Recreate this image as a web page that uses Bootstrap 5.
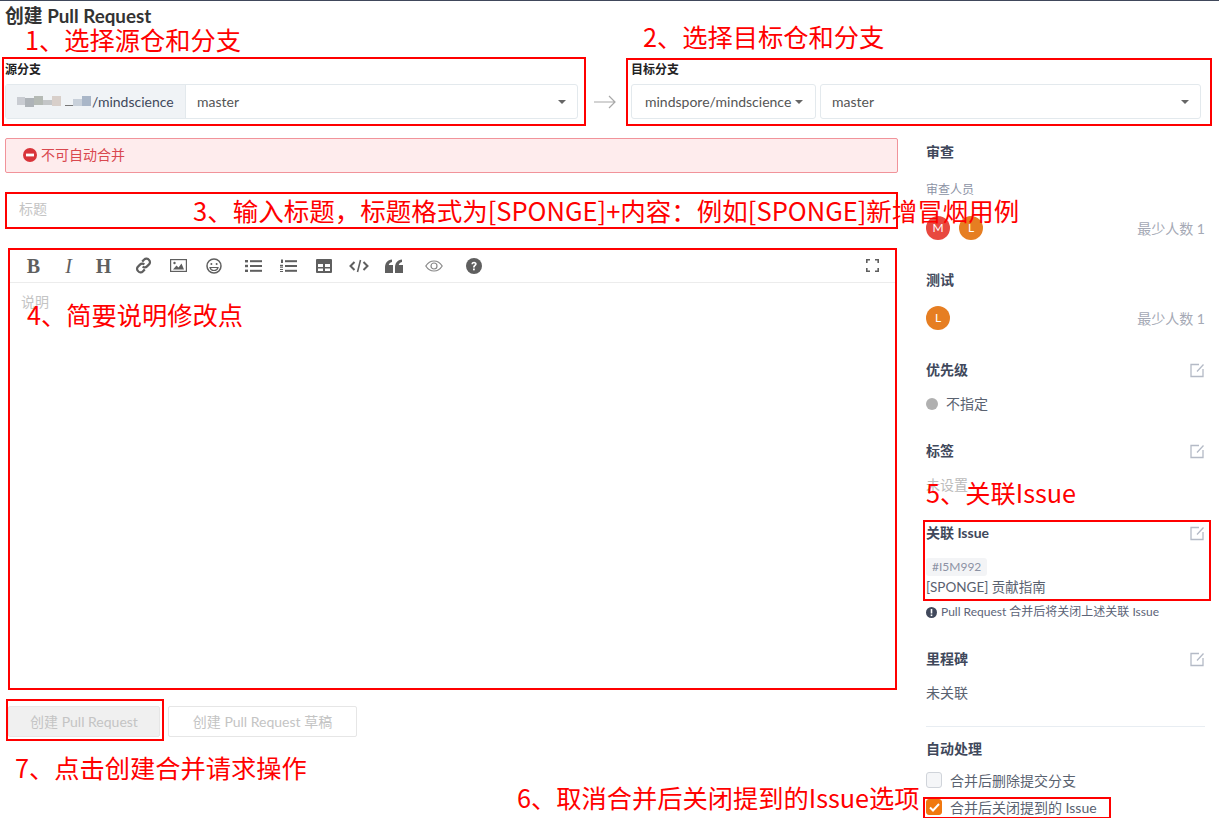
<!DOCTYPE html>
<html lang="zh-CN">
<head>
    <meta charset="UTF-8">
    <title>创建 Pull Request</title>
    <link href="https://cdn.jsdelivr.net/npm/bootstrap@5.3.0/dist/css/bootstrap.min.css" rel="stylesheet">
    <style>
        body { font-family: Lato, "Noto Sans CJK SC", sans-serif; font-size: 14px; color: #40485b; background: #fff; border-top: 1px solid #40485b; }
        .page-wrap { position: relative; height: 817px; overflow: hidden; }

        .page-title { font-size: 18.8px; font-weight: 700; line-height: 24px; margin: 3px 0 0 5px; color: #333; }
        .branch-row { margin: 34px 0 0 5px; }
        .branch-label { font-size: 12px; font-weight: 700; line-height: 16px; color: #222; margin-bottom: 6px; }
        .branch-src { width: 573px; }
        .branch-arrow { width: 53px; height: 35px; }
        .branch-dst { width: 570px; }
        .fake-box { height: 35px; border: 1px solid #e3e9ed; border-radius: 3px; font-size: 14px; color: #555; }
        .fake-addon { width: 180px; flex-shrink: 0; background: #f0f3f6; border-right: 1px solid #e3e9ed; color: #40485b; padding-left: 11px; white-space: nowrap; }
        .fake-repo { width: 185px; padding-left: 13px; }
        .fake-branch { padding: 0 11px; }
        .caret-down { width: 0; height: 0; border-left: 4px solid transparent; border-right: 4px solid transparent; border-top: 4px solid #666; }

        .left-col { width: 893px; margin-left: 5px; }
        .side-col { width: 279px; margin-left: 28px; }
        .not-merge { height: 35px; margin: 19px 0 0; padding: 0 0 2px 17px; background: #feeced; border: 1px solid #f1939a; border-radius: 2px; color: #d9484f; font-size: 14px; }
        .title-input { height: 34px; margin-top: 19px; padding: 0 14px 2px; border: 0; font-size: 14px; }
        .title-input::placeholder, .desc-input::placeholder { color: #c4c4c4; }
        .editor-box { width: 886px; height: 438px; margin: 23px 0 0 4px; }
        .editor-tools { height: 34px; padding-left: 7px; border-bottom: 1px solid #ececec; color: #5f5f5f; }
        .tool-btn { width: 35px; display: flex; align-items: center; justify-content: center; }
        .tool-gap { margin-left: 5px; }
        .tool-text { font-family: "Liberation Serif", serif; font-size: 20px; line-height: 1; font-weight: 700; }
        .tool-italic { font-style: italic; font-weight: 400; }
        .tool-full { margin-left: auto; margin-right: 5px; }
        .desc-input { padding: 8px 12px; border: 0; font-size: 14px; height: 400px; resize: none; }

        .action-row { margin: 19px 0 0 3px; gap: 8px; }
        .act-btn { height: 31px; border-radius: 2px; font-size: 14px; line-height: 29px; padding: 0; text-align: center; color: #c4c4c4; }
        .act-main { width: 152px; background: #f0f0f0; border: 1px solid #e6e6e6; }
        .act-draft { width: 189px; background: #fff; border: 1px solid #e6e6e6; }

        .side-first { margin-top: 23px; }
        .side-title { font-size: 14px; font-weight: 700; line-height: 20px; color: #40485b; }
        .side-text { font-size: 14px; line-height: 20px; color: #5a6270; }
        .side-muted { font-size: 12px; line-height: 20px; color: #8c92a4; }
        .side-faint { color: #bbb; }
        .min-count { font-size: 14px; color: #a5a9b5; }
        .avatar-dot { width: 24px; height: 24px; border-radius: 50%; color: #fff; font-size: 12px; display: flex; align-items: center; justify-content: center; }
        .avatar-red { background: #e8483f; }
        .avatar-orange { background: #e67e22; }
        .avatar-row { height: 24px; gap: 9px; }
        .prio-dot { width: 12px; height: 12px; border-radius: 50%; background: #b0b0b0; margin-right: 8px; }
        .issue-wrap { margin-top: 15px; }
        .issue-tag { height: 18px; line-height: 18px; padding: 0 6px; background: #f3f4f6; border-radius: 3px; font-size: 12px; color: #8c92a4; }
        .issue-name { font-size: 13.5px; margin-top: 1px; }
        .issue-note { margin-top: 5px; height: 20px; }
        .close-note { font-size: 12px; color: #5c6478; }
        .note-icon { width: 11px; height: 11px; margin-right: 4px; }
        .side-rule { border: 0; height: 1px; background: #e8edf2; opacity: 1; margin: 23px 0 12px; }
        .fake-check { width: 16px; height: 16px; border: 1px solid #d0d4da; background: #f5f6f8; border-radius: 3px; margin-right: 8px; }
        .fake-check-on { background: #f0780f; border-color: #f0780f; display: flex; align-items: center; justify-content: center; }
        .check-row { font-size: 14px; color: #5a6270; height: 20px; }
        .check-first { margin-top: 11px; }
        .check-second { margin-top: 7px; }

        .mt-14 { margin-top: 14px; } .mt-16 { margin-top: 16px; } .mt-18 { margin-top: 18px; }
        .mt-27 { margin-top: 27px; } .mt-28 { margin-top: 28px; } .mt-30 { margin-top: 30px; }

        /* red annotations lying over the screenshot */
        .mark-box { position: absolute; border: 2px solid #f00; pointer-events: none; }
        .mark-text { position: absolute; color: #f00; font-family: "Noto Sans CJK SC", sans-serif; font-size: 25.25px; line-height: 32px; white-space: nowrap; }
        .box-src { left: 2px; top: 56px; width: 584px; height: 69px; }
        .box-dst { left: 626px; top: 57px; width: 586px; height: 68px; }
        .box-title { left: 5px; top: 191px; width: 893px; height: 37px; }
        .box-editor { left: 8px; top: 247px; width: 889px; height: 442px; }
        .box-create { left: 6px; top: 698px; width: 158px; height: 42px; }
        .box-issue { left: 923px; top: 519px; width: 288px; height: 81px; }
        .box-check { left: 923px; top: 796px; width: 188px; height: 22px; }
        .text-1 { left: 25px; top: 22px; }
        .text-2 { left: 643px; top: 19px; }
        .text-3 { left: 193px; top: 193px; font-size: 25.5px; }
        .text-4 { left: 27px; top: 297px; }
        .text-5 { left: 926px; top: 475px; }
        .text-6 { left: 517px; top: 780px; }
        .text-7 { left: 15px; top: 750px; }
    </style>
</head>
<body>

<div class="page-wrap">
    <div class="page-title">创建 Pull Request</div>

    <!-- Branch selectors -->
    <div class="branch-row d-flex align-items-end">
        <div class="branch-src">
            <div class="branch-label">源分支</div>
            <div class="fake-box d-flex align-items-center">
                <div class="fake-addon h-100 d-flex align-items-center">
                    <svg width="75" height="14" viewBox="0 0 75 14">
                        <rect x="0" y="2" width="8" height="8" fill="#c9ccd2"/><rect x="8" y="3" width="9" height="9" fill="#aeb3b8"/>
                        <rect x="17" y="1" width="9" height="9" fill="#b5bab5"/><rect x="26" y="5" width="9" height="5" fill="#c4c6c8"/>
                        <rect x="35" y="1" width="9" height="10" fill="#d8cfca"/><rect x="48" y="10" width="8" height="1" fill="#777"/>
                        <rect x="56" y="4" width="9" height="7" fill="#c8d0da"/><rect x="65" y="1" width="9" height="10" fill="#a9b6c8"/>
                    </svg><span>/mindscience</span>
                </div>
                <div class="fake-branch flex-grow-1 d-flex align-items-center justify-content-between">
                    <span>master</span><span class="caret-down"></span>
                </div>
            </div>
        </div>
        <div class="branch-arrow d-flex align-items-center justify-content-center">
            <svg width="24" height="14" viewBox="0 0 24 14" fill="none" stroke="#a8a8a8" stroke-width="1.2"><path d="M1 7h21M16 1l6 6-6 6"/></svg>
        </div>
        <div class="branch-dst">
            <div class="branch-label">目标分支</div>
            <div class="d-flex gap-1">
                <div class="fake-box fake-repo d-flex align-items-center gap-1">
                    <span>mindspore/mindscience</span><span class="caret-down"></span>
                </div>
                <div class="fake-box fake-branch flex-grow-1 d-flex align-items-center justify-content-between">
                    <span>master</span><span class="caret-down"></span>
                </div>
            </div>
        </div>
    </div>

    <div class="d-flex">
        <!-- Main form -->
        <div class="left-col">
            <div class="not-merge d-flex align-items-center">
                <svg class="me-1" width="14" height="14" viewBox="0 0 14 14"><circle cx="7" cy="7" r="7" fill="#d9343a"/><rect x="3" y="5.6" width="8" height="2.8" fill="#fff"/></svg>
                <span>不可自动合并</span>
            </div>
            <input type="text" class="form-control title-input shadow-none" placeholder="标题">

            <div class="editor-box">
                <div class="editor-tools d-flex align-items-center">
                    <span class="tool-btn tool-text">B</span>
                    <span class="tool-btn tool-text tool-italic">I</span>
                    <span class="tool-btn tool-text">H</span>
                    <span class="tool-btn tool-gap">
                        <svg width="17" height="17" viewBox="0 0 17 17" fill="none" stroke="currentColor" stroke-width="2.2"><path d="M7.2 4.6l2-2a3 3 0 0 1 4.8 0.4 3 3 0 0 1 0 4.4l-2 2a3 3 0 0 1-4.3 0"/><path d="M9.8 12.4l-2 2A3 3 0 0 1 3 14a3 3 0 0 1 0-4.4l2-2a3 3 0 0 1 4.3 0"/></svg>
                    </span>
                    <span class="tool-btn">
                        <svg width="17" height="13" viewBox="0 0 17 13"><rect x="0.6" y="0.6" width="15.8" height="11.8" fill="none" stroke="currentColor" stroke-width="1.2"/><path d="M3 10.5l3.5-4 2 2 3-4 2.5 6z" fill="currentColor"/><circle cx="4.5" cy="4" r="1.2" fill="currentColor"/></svg>
                    </span>
                    <span class="tool-btn">
                        <svg width="16" height="16" viewBox="0 0 16 16" fill="none" stroke="currentColor" stroke-width="1.5"><circle cx="8" cy="8" r="7"/><circle cx="5.4" cy="6" r="1" fill="currentColor" stroke="none"/><circle cx="10.6" cy="6" r="1" fill="currentColor" stroke="none"/><path d="M4 9.5h8c-.5 2-2 3-4 3s-3.5-1-4-3z" stroke-width="1.2"/></svg>
                    </span>
                    <span class="tool-btn tool-gap">
                        <svg width="17" height="14" viewBox="0 0 17 14" fill="currentColor"><rect x="0" y="1" width="3" height="2.4"/><rect x="0" y="5.8" width="3" height="2.4"/><rect x="0" y="10.6" width="3" height="2.4"/><rect x="5" y="1.2" width="12" height="2"/><rect x="5" y="6" width="12" height="2"/><rect x="5" y="10.8" width="12" height="2"/></svg>
                    </span>
                    <span class="tool-btn">
                        <svg width="17" height="14" viewBox="0 0 17 14" fill="currentColor"><rect x="1" y="0.5" width="2" height="3.5"/><rect x="0" y="5.8" width="3" height="1.2"/><rect x="0" y="7.5" width="3" height="1.2"/><rect x="0" y="10" width="3" height="1"/><rect x="0" y="12" width="3" height="1"/><rect x="5" y="1.2" width="12" height="2"/><rect x="5" y="6" width="12" height="2"/><rect x="5" y="10.8" width="12" height="2"/></svg>
                    </span>
                    <span class="tool-btn">
                        <svg width="16" height="14" viewBox="0 0 16 14"><path fill="currentColor" fill-rule="evenodd" d="M1 0h14a1 1 0 0 1 1 1v12a1 1 0 0 1-1 1H1a1 1 0 0 1-1-1V1a1 1 0 0 1 1-1zM2 5v3h5V5zM9 5v3h5V5zM2 9.5V12h5V9.5zM9 9.5V12h5V9.5z"/></svg>
                    </span>
                    <span class="tool-btn">
                        <svg width="20" height="14" viewBox="0 0 20 14" fill="none" stroke="currentColor" stroke-width="2"><path d="M5.5 3L1.5 7l4 4M14.5 3l4 4-4 4"/><path d="M11.5 1L8.5 13" stroke-width="1.6"/></svg>
                    </span>
                    <span class="tool-btn">
                        <svg width="18" height="14" viewBox="0 0 18 14" fill="currentColor"><path d="M0 8.5C0 4 2.5 1 7 0.5v2.5C5 3.5 4 4.5 3.8 6H8v8H0zM10 8.5C10 4 12.5 1 17 0.5v2.5c-2 .5-3 1.500-3.200 3H18v8h-8z"/></svg>
                    </span>
                    <span class="tool-btn tool-gap">
                        <svg width="18" height="12" viewBox="0 0 18 12" fill="none" stroke="#888" stroke-width="1.2"><path d="M0.8 6C3 2.5 6 1 9 1s6 1.5 8.2 5C15 9.5 12 11 9 11S3 9.5 0.8 6z"/><circle cx="9" cy="6" r="3"/></svg>
                    </span>
                    <span class="tool-btn tool-gap">
                        <svg width="16" height="16" viewBox="0 0 16 16"><circle cx="8" cy="8" r="8" fill="currentColor"/><path d="M5.4 6.2C5.5 4.5 6.7 3.8 8 3.8c1.500 0 2.700.9 2.700 2.300 0 1.800-2 1.800-2 3.400H7c0-2.300 1.900-2.300 1.900-3.400 0-.5-.4-.8-.9-.8-.6 0-1 .4-1.100 1z" fill="#fff"/><rect x="7" y="10.5" width="1.8" height="1.8" fill="#fff"/></svg>
                    </span>
                    <span class="tool-btn tool-full">
                        <svg width="13" height="13" viewBox="0 0 13 13" fill="none" stroke="currentColor" stroke-width="1.6"><path d="M0.8 4V0.8H4M9 0.8h3.2V4M12.2 9v3.2H9M4 12.2H0.8V9"/></svg>
                    </span>
                </div>
                <textarea class="form-control desc-input shadow-none" placeholder="说明"></textarea>
            </div>

            <div class="action-row d-flex">
                <button type="button" class="act-btn act-main" disabled>创建 Pull Request</button>
                <button type="button" class="act-btn act-draft" disabled>创建 Pull Request 草稿</button>
            </div>
        </div>

        <!-- Sidebar -->
        <div class="side-col">
            <div class="side-title side-first">审查</div>
            <div class="side-muted mt-18">审查人员</div>
            <div class="avatar-row d-flex align-items-center mt-16">
                <span class="avatar-dot avatar-red">M</span>
                <span class="avatar-dot avatar-orange">L</span>
                <span class="min-count ms-auto">最少人数 1</span>
            </div>

            <div class="side-title mt-30">测试</div>
            <div class="avatar-row d-flex align-items-center mt-16">
                <span class="avatar-dot avatar-orange">L</span>
                <span class="min-count ms-auto">最少人数 1</span>
            </div>

            <div class="side-title mt-30 d-flex justify-content-between align-items-center">优先级
                <svg width="15" height="15" viewBox="0 0 15 15" fill="none" stroke="#b4bac6" stroke-width="1.3"><path d="M9 1.5H1v12h12V6M7 8.5l6.5-7"/></svg>
            </div>
            <div class="side-text mt-14 d-flex align-items-center"><span class="prio-dot"></span>不指定</div>

            <div class="side-title mt-27 d-flex justify-content-between align-items-center">标签
                <svg width="15" height="15" viewBox="0 0 15 15" fill="none" stroke="#b4bac6" stroke-width="1.3"><path d="M9 1.5H1v12h12V6M7 8.5l6.5-7"/></svg>
            </div>
            <div class="side-text side-faint mt-14">未设置</div>

            <div class="side-title mt-28 d-flex justify-content-between align-items-center">关联 Issue
                <svg width="15" height="15" viewBox="0 0 15 15" fill="none" stroke="#b4bac6" stroke-width="1.3"><path d="M9 1.5H1v12h12V6M7 8.5l6.5-7"/></svg>
            </div>
            <div class="d-flex issue-wrap">
                <span class="issue-tag">#I5M992</span>
            </div>
            <div class="side-text issue-name">[SPONGE] 贡献指南</div>
            <div class="close-note d-flex align-items-center issue-note">
                <svg class="note-icon" viewBox="0 0 11 11"><circle cx="5.5" cy="5.5" r="5.5" fill="#40485b"/><rect x="4.7" y="2" width="1.6" height="4.5" fill="#fff"/><rect x="4.7" y="7.5" width="1.6" height="1.6" fill="#fff"/></svg>
                <span>Pull Request 合并后将关闭上述关联 Issue</span>
            </div>

            <div class="side-title mt-27 d-flex justify-content-between align-items-center">里程碑
                <svg width="15" height="15" viewBox="0 0 15 15" fill="none" stroke="#b4bac6" stroke-width="1.3"><path d="M9 1.5H1v12h12V6M7 8.5l6.5-7"/></svg>
            </div>
            <div class="side-text mt-14">未关联</div>

            <hr class="side-rule">

            <div class="side-title">自动处理</div>
            <div class="check-row d-flex align-items-center check-first"><span class="fake-check"></span>合并后删除提交分支</div>
            <div class="check-row d-flex align-items-center check-second">
                <span class="fake-check fake-check-on">
                    <svg width="11" height="9" viewBox="0 0 11 9" fill="none" stroke="#fff" stroke-width="2"><path d="M1 4.5l3 3 6-6.5"/></svg>
                </span>合并后关闭提到的 Issue
            </div>
        </div>
    </div>

    <!-- Annotations -->
    <div class="mark-box box-src"></div>
    <div class="mark-box box-dst"></div>
    <div class="mark-box box-title"></div>
    <div class="mark-box box-editor"></div>
    <div class="mark-box box-create"></div>
    <div class="mark-box box-issue"></div>
    <div class="mark-box box-check"></div>
    <div class="mark-text text-1">1、选择源仓和分支</div>
    <div class="mark-text text-2">2、选择目标仓和分支</div>
    <div class="mark-text text-3">3、输入标题，标题格式为[SPONGE]+内容：例如[SPONGE]新增冒烟用例</div>
    <div class="mark-text text-4">4、简要说明修改点</div>
    <div class="mark-text text-5">5、关联Issue</div>
    <div class="mark-text text-6">6、取消合并后关闭提到的Issue选项</div>
    <div class="mark-text text-7">7、点击创建合并请求操作</div>
</div>

<script src="https://cdn.jsdelivr.net/npm/bootstrap@5.3.0/dist/js/bootstrap.bundle.min.js"></script>
</body>
</html>
